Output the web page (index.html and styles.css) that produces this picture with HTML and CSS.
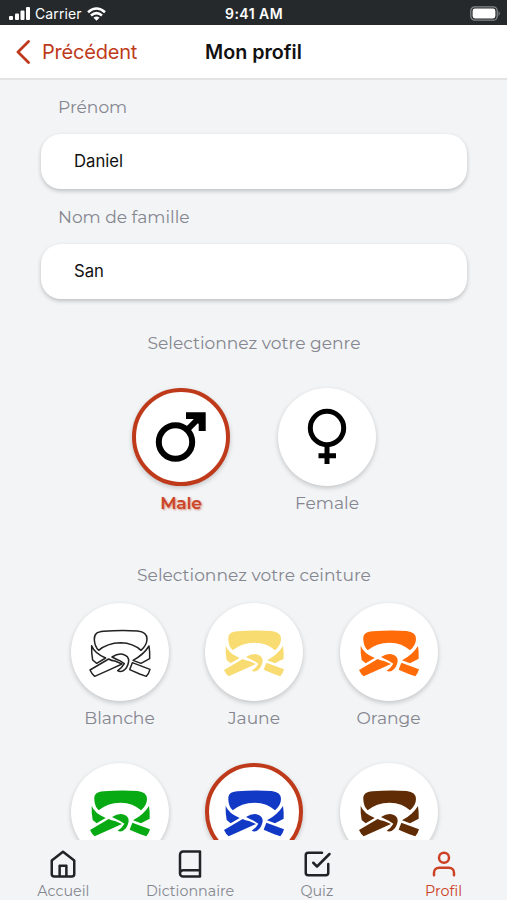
FILE: index.html
```html
<!DOCTYPE html>
<html lang="fr">
<head>
<meta charset="utf-8">
<title>Mon profil</title>
<link rel="stylesheet" href="styles.css">
</head>
<body>
<svg class="defs" aria-hidden="true">
  <symbol id="belt" viewBox="0 0 294 294">
    <g transform="translate(-32 -38)" stroke-linejoin="round">
      <path d="M102 148C101 131 109 125 130 123Q180 119 232 122Q260 125 260 146Q260 164 242 180Q219 158 181 157Q140 158 115 180Q103 168 102 148Z"/>
      <path d="M94 166Q102 188 136 203L109 219L97 209Q93 190 94 166Z"/>
      <path d="M266 167Q269 186 268 205L242 219L218 210Q250 193 266 167Z"/>
      <path d="M145 206Q153 211 164 212L185 221L150 237L103 258Q95 252 89 239Z"/>
      <path d="M155 200Q173 189 187 192Q206 197 205 213Q202 234 187 242Q178 245 172 241Q184 234 192 220L178 211Q168 207 155 200Z"/>
      <path d="M216 217L269 237Q265 251 258 258L238 251L208 238Z"/>
    </g>
  </symbol>
</svg>
<div class="screen">
  <div class="status">
    <div class="carrier">
      <svg width="22" height="14" viewBox="0 0 22 14" fill="#fff"><rect y="9" width="4" height="4" rx="1"/><rect x="6" y="6.500" width="4" height="6.500" rx="1"/><rect x="11.500" y="3.500" width="4" height="9.500" rx="1"/><rect x="17" y="0" width="4" height="13" rx="1"/></svg>
      <span>Carrier</span>
      <svg class="wifi" width="19" height="14" viewBox="0 0 19 14" fill="none" stroke="#fff" stroke-width="2.600"><path d="M1 5.200Q9.500-2.200 18 5.200M4 8.500Q9.500 3.700 15 8.500"/><path d="M6.500 10.700Q9.500 8.300 12.500 10.700L9.500 13.800Z" fill="#fff" stroke="none"/></svg>
    </div>
    <div class="time">9:41 AM</div>
    <svg class="battery" width="31" height="15" viewBox="0 0 31 15"><rect x=".8" y=".8" width="26.400" height="13.400" rx="4" fill="none" stroke="#85888a" stroke-width="1.300"/><rect x="2.600" y="2.600" width="22.800" height="9.800" rx="2.300" fill="#fff"/><path d="M28.500 5Q31 7.500 28.500 10Z" fill="#85888a"/></svg>
  </div>
  <header class="header">
    <a class="back"><svg width="14" height="24" viewBox="0 0 14 24" fill="none" stroke="#be3a1b" stroke-width="2.800" stroke-linecap="round" stroke-linejoin="round"><path d="M12.500 1.500L2 12L12.500 22.500"/></svg><span>Précédent</span></a>
    <h1>Mon profil</h1>
  </header>
  <main class="content">
    <label>Prénom</label>
    <div class="field">Daniel</div>
    <label class="l-last">Nom de famille</label>
    <div class="field">San</div>
    <h2 class="t-genre">Selectionnez votre genre</h2>
    <div class="genders">
      <div class="option male">
        <div class="disc selected"><svg viewBox="0 0 98 98" fill="none" stroke="#000"><circle cx="43.500" cy="54" r="16.700" stroke-width="6"/><path d="M55 42L66 31" stroke-width="6"/><path d="M54 24.300H73.700V43H66.700V36L61.500 31H54Z" fill="#000" stroke="none"/></svg></div>
        <span>Male</span>
      </div>
      <div class="option">
        <div class="disc"><svg viewBox="0 0 98 98" fill="none" stroke="#000" stroke-width="5"><circle cx="49" cy="40" r="16.700"/><path d="M49 57V76M40.500 67.800H58"/></svg></div>
        <span>Female</span>
      </div>
    </div>
    <h2 class="t-belt">Selectionnez votre ceinture</h2>
    <div class="belts">
      <div class="option"><div class="disc"><svg class="white"><use href="#belt"/></svg></div><span>Blanche</span></div>
      <div class="option"><div class="disc"><svg class="yellow"><use href="#belt"/></svg></div><span>Jaune</span></div>
      <div class="option"><div class="disc"><svg class="orange"><use href="#belt"/></svg></div><span>Orange</span></div>
      <div class="option"><div class="disc"><svg class="green"><use href="#belt"/></svg></div></div>
      <div class="option"><div class="disc selected"><svg class="blue"><use href="#belt"/></svg></div></div>
      <div class="option"><div class="disc"><svg class="brown"><use href="#belt"/></svg></div></div>
    </div>
  </main>
  <nav class="tabs">
    <a class="tab"><svg viewBox="0 0 24 24"><path d="M3 9.200l9-7 9 7V20a2 2 0 0 1-2 2H5a2 2 0 0 1-2-2zM9.300 22v-8.700h5.400V22"/></svg><span>Accueil</span></a>
    <a class="tab"><svg viewBox="0 0 24 24"><path d="M4 19.500A2.500 2.500 0 0 1 6.500 17H20M6.500 2H20v20H6.500A2.500 2.500 0 0 1 4 19.500v-15A2.500 2.500 0 0 1 6.500 2z"/></svg><span>Dictionnaire</span></a>
    <a class="tab"><svg viewBox="0 0 24 24"><path d="M9 11l3 3L22 4M21 12v7a2 2 0 0 1-2 2H5a2 2 0 0 1-2-2V5a2 2 0 0 1 2-2h11"/></svg><span>Quiz</span></a>
    <a class="tab active"><svg viewBox="0 0 24 24"><path d="M20 21v-2a4 4 0 0 0-4-4H8a4 4 0 0 0-4 4v2"/><circle cx="12" cy="7" r="4"/></svg><span>Profil</span></a>
  </nav>
</div>
</body>
</html>
```
FILE: styles.css
```css
* { box-sizing: border-box; }
body { margin: 0; font-family: Montserrat, Inter, sans-serif; color: #85868f; }
svg { display: block; flex: none; }
.defs { position: absolute; width: 0; height: 0; }
.screen { width: 507px; height: 900px; display: flex; flex-direction: column; background: #f2f4f6; overflow: hidden; }

.status { flex: none; height: 25px; background: #25292c; color: #fff; display: grid; grid-template-columns: 1fr auto 1fr; align-items: center; padding: 2px 6px 0 9px; font: 400 14px Inter, sans-serif; }
.carrier { display: flex; align-items: center; gap: 4px; }
.carrier span { letter-spacing: .1px; }
.wifi { margin-left: 1px; }
.time { font-weight: 600; font-size: 14px; letter-spacing: .45px; margin-left: -2px; }
.battery { justify-self: end; }

.header { flex: none; height: 55px; background: #fff; border-bottom: 2px solid #e2e3e4; display: grid; grid-template-columns: 1fr auto 1fr; align-items: center; padding: 0 16px; font-family: Inter, sans-serif; }
.back { display: flex; align-items: center; gap: 12px; color: #be3a1b; font-size: 20px; letter-spacing: -.2px; }
h1 { margin: 0; font-size: 19.700px; font-weight: 600; color: #111; }

.content { flex: 1; min-height: 0; overflow: hidden; display: flex; flex-direction: column; padding: 0 40px 0 41px; }
label { flex: none; font-size: 17.100px; line-height: 22px; margin: 16px 0 16px 17px; }
.l-last { margin-top: 17px; }
.field { flex: none; height: 55px; border-radius: 20px; background: #fff; box-shadow: 0 2px 4px rgba(0,0,0,.22); padding-left: 33px; font: 400 16.700px/55px Inter, sans-serif; color: #111; }
h2 { flex: none; margin: 0; font-size: 17.100px; line-height: 22px; font-weight: 400; text-align: center; }
.t-genre { margin-top: 33px; }
.genders { flex: none; display: flex; justify-content: center; gap: 48px; margin-top: 34px; height: 134px; }
.option { display: flex; flex-direction: column; align-items: center; width: 98px; font-size: 17.100px; line-height: 22px; }
.option span { margin-top: 6px; white-space: nowrap; }
.disc { width: 98px; height: 98px; border-radius: 50%; background: #fff; box-shadow: 0 2px 5px rgba(0,0,0,.2); }
.disc svg { width: 98px; height: 98px; }
.selected { border: 4px solid #be3a1b; }
.selected svg { margin: -4px; }
.male span { color: #cc4528; font-weight: 600; letter-spacing: -.2px; text-shadow: 1px 1px 2px rgba(190,58,27,.55); }
.t-belt { margin-top: 42px; }
.belts { flex: none; display: grid; grid-template-columns: repeat(3, 98px); justify-content: center; column-gap: 36.500px; row-gap: 34px; margin-top: 17px; }
.white { fill: #fff; stroke: #222; stroke-width: 4.500px; }
.yellow { fill: #f8dc72; }
.orange { fill: #ff6b08; }
.green { fill: #08aa13; }
.blue { fill: #1238c6; }
.brown { fill: #602c05; }

.tabs { flex: none; height: 60px; background: #f2f4f6; display: grid; grid-template-columns: repeat(4, 1fr); }
.tab { display: flex; flex-direction: column; align-items: center; font-size: 14.300px; line-height: 18px; padding-top: 9px; }
.tab svg { width: 30px; height: 30px; fill: none; stroke: #222327; stroke-width: 2; stroke-linecap: round; stroke-linejoin: round; }
.tab span { margin-top: 3px; }
.active { color: #cc4024; }
.active svg { stroke: #cc4024; }
```
